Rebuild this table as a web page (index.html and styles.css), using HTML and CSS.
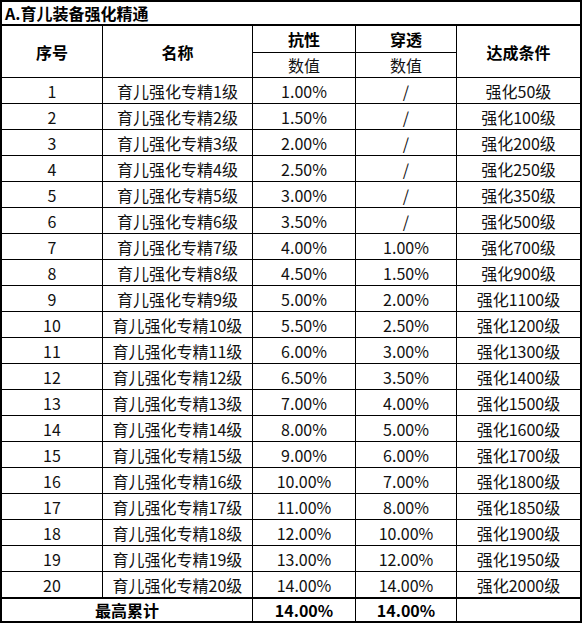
FILE: index.html
```html
<!DOCTYPE html>
<html lang="zh">
<head>
<meta charset="utf-8">
<link rel="stylesheet" href="styles.css">
</head>
<body>
<div class="sheet">
  <div class="c title">A.育儿装备强化精通</div>
  <div class="c hd r2">序号</div>
  <div class="c hd r2">名称</div>
  <div class="c hd">抗性</div>
  <div class="c hd">穿透</div>
  <div class="c hd r2">达成条件</div>
  <div class="c sub">数值</div>
  <div class="c sub">数值</div>

  <div class="c">1</div><div class="c">育儿强化专精1级</div><div class="c">1.00%</div><div class="c">/</div><div class="c">强化50级</div>
  <div class="c">2</div><div class="c">育儿强化专精2级</div><div class="c">1.50%</div><div class="c">/</div><div class="c">强化100级</div>
  <div class="c">3</div><div class="c">育儿强化专精3级</div><div class="c">2.00%</div><div class="c">/</div><div class="c">强化200级</div>
  <div class="c">4</div><div class="c">育儿强化专精4级</div><div class="c">2.50%</div><div class="c">/</div><div class="c">强化250级</div>
  <div class="c">5</div><div class="c">育儿强化专精5级</div><div class="c">3.00%</div><div class="c">/</div><div class="c">强化350级</div>
  <div class="c">6</div><div class="c">育儿强化专精6级</div><div class="c">3.50%</div><div class="c">/</div><div class="c">强化500级</div>
  <div class="c">7</div><div class="c">育儿强化专精7级</div><div class="c">4.00%</div><div class="c">1.00%</div><div class="c">强化700级</div>
  <div class="c">8</div><div class="c">育儿强化专精8级</div><div class="c">4.50%</div><div class="c">1.50%</div><div class="c">强化900级</div>
  <div class="c">9</div><div class="c">育儿强化专精9级</div><div class="c">5.00%</div><div class="c">2.00%</div><div class="c">强化1100级</div>
  <div class="c">10</div><div class="c">育儿强化专精10级</div><div class="c">5.50%</div><div class="c">2.50%</div><div class="c">强化1200级</div>
  <div class="c">11</div><div class="c">育儿强化专精11级</div><div class="c">6.00%</div><div class="c">3.00%</div><div class="c">强化1300级</div>
  <div class="c">12</div><div class="c">育儿强化专精12级</div><div class="c">6.50%</div><div class="c">3.50%</div><div class="c">强化1400级</div>
  <div class="c">13</div><div class="c">育儿强化专精13级</div><div class="c">7.00%</div><div class="c">4.00%</div><div class="c">强化1500级</div>
  <div class="c">14</div><div class="c">育儿强化专精14级</div><div class="c">8.00%</div><div class="c">5.00%</div><div class="c">强化1600级</div>
  <div class="c">15</div><div class="c">育儿强化专精15级</div><div class="c">9.00%</div><div class="c">6.00%</div><div class="c">强化1700级</div>
  <div class="c">16</div><div class="c">育儿强化专精16级</div><div class="c">10.00%</div><div class="c">7.00%</div><div class="c">强化1800级</div>
  <div class="c">17</div><div class="c">育儿强化专精17级</div><div class="c">11.00%</div><div class="c">8.00%</div><div class="c">强化1850级</div>
  <div class="c">18</div><div class="c">育儿强化专精18级</div><div class="c">12.00%</div><div class="c">10.00%</div><div class="c">强化1900级</div>
  <div class="c">19</div><div class="c">育儿强化专精19级</div><div class="c">13.00%</div><div class="c">12.00%</div><div class="c">强化1950级</div>
  <div class="c">20</div><div class="c">育儿强化专精20级</div><div class="c">14.00%</div><div class="c">14.00%</div><div class="c">强化2000级</div>

  <div class="c tot span2">最高累计</div>
  <div class="c tot">14.00%</div>
  <div class="c tot">14.00%</div>
  <div class="c tot"></div>
</div>
</body>
</html>
```
FILE: styles.css
```css
html, body {
  margin: 0;
  padding: 0;
  background: #fff;
}
.sheet {
  width: 582px;
  box-sizing: border-box;
  display: grid;
  grid-template-columns: 100px 149px 102px 100px 123px;
  grid-template-rows: 23px 26px 24px repeat(20, 25px) 23px;
  gap: 1px;
  padding: 2px;
  background: #000;
  font-family: "Noto Sans CJK SC", "Microsoft YaHei", sans-serif;
  font-size: 16px;
  color: #111;
}
.c {
  background: #fff;
  display: flex;
  align-items: center;
  justify-content: center;
  line-height: 1;
  white-space: nowrap;
}
.title {
  grid-column: 1 / -1;
  justify-content: flex-start;
  padding-left: 3px;
  font-weight: bold;
  margin-bottom: 1px;
  color: #000;
}
.hd {
  font-weight: bold;
  color: #000;
}
.r2 {
  grid-row: span 2;
}
.sub {
  color: #111;
}
.tot {
  font-weight: bold;
  margin-top: 1px;
  color: #000;
}
.span2 {
  grid-column: span 2;
}
```
